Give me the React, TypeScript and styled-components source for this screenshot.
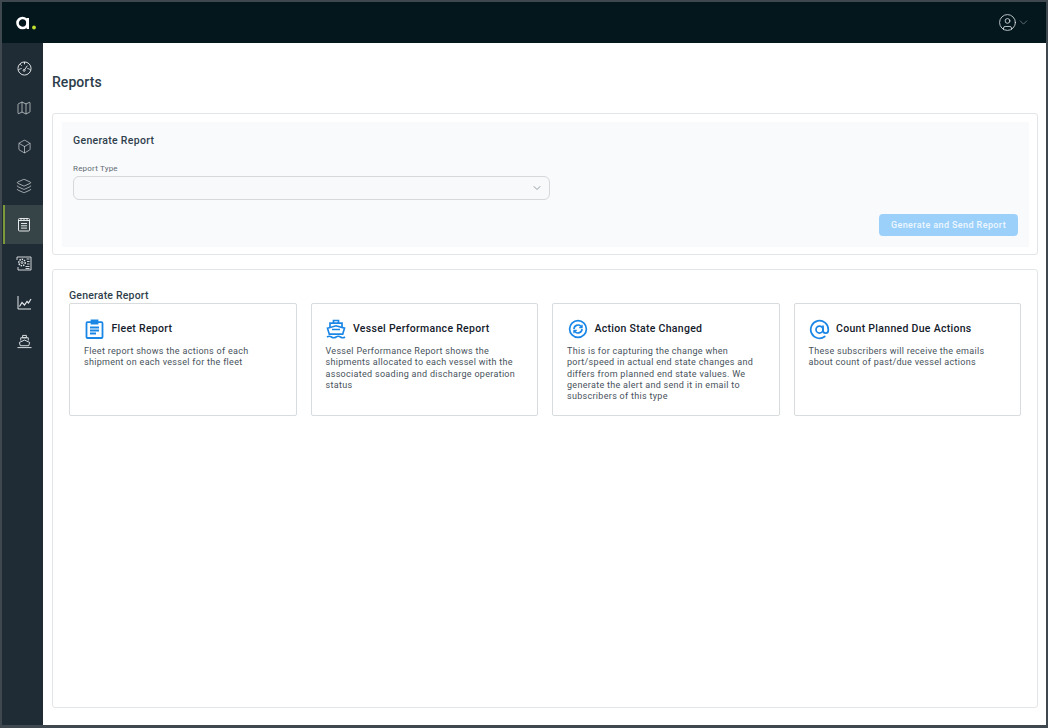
import React from 'react';
import styled, { createGlobalStyle } from 'styled-components';
import { AtSign, Box, ChevronDown, CircleUser, Layers, Map as MapIcon } from 'lucide-react';

const GlobalStyle = createGlobalStyle`
  html, body {
    margin: 0;
    padding: 0;
    background: #fff;
    font-family: "Roboto", "Liberation Sans", sans-serif;
  }
  * { box-sizing: border-box; }
`;

// Icons the packages do not have in this shape
const GaugeIcon = () => (
  <svg width="15" height="15" viewBox="0 0 16 16" fill="none" stroke="currentColor" strokeWidth="1">
    <circle cx="8" cy="8" r="7" />
    <path d="M1.500 9.500C3.500 8.200 4.500 8 5 8M14.500 9.500C12.500 8.200 11.500 8 11 8M8 9.500L11 5M8 1v2.500M3.500 3.500l1.500 1.500" />
    <circle cx="7.600" cy="10" r="1" />
  </svg>
);

const NotesIcon = () => (
  <svg width="14" height="15" viewBox="0 0 14 15" fill="none" stroke="currentColor" strokeWidth="1">
    <rect x="1.500" y="1.500" width="11" height="12.500" rx="1" />
    <path d="M1.500 3.500h11M4 1v2M7 1v2M10 1v2M4 6.500h6M4 8.800h6M4 11.100h6" />
  </svg>
);

const PlanIcon = () => (
  <svg width="16" height="15" viewBox="0 0 16 15" fill="none" stroke="currentColor" strokeWidth="0.9">
    <path d="M4 1H15V14H2V11M1 4V1H4" />
    <circle cx="6" cy="6.500" r="3.200" strokeDasharray="1.500 0.900" strokeWidth="1.500" />
    <circle cx="6" cy="6.500" r="1" />
    <path d="M10.500 3h3M11 5.500h2.500M11 8h2.500M9.500 10.500h4M9.500 12.500h4" />
  </svg>
);

const TrendIcon = () => (
  <svg width="15" height="15" viewBox="0 0 15 15" fill="none" stroke="currentColor" strokeWidth="1">
    <path d="M1 1v13h13" />
    <path d="M2.500 11.500L5 7.500l2.500 2.500L10 6.500l1.500 1.500L14 4" strokeWidth="1.200" />
  </svg>
);

const ShipIcon = () => (
  <svg width="15" height="15" viewBox="0 0 16 16" fill="none" stroke="currentColor" strokeWidth="1">
    <path d="M6 1.500h4V4H6zM4 7V4h8v3" />
    <path d="M2.500 9L8 6.500 13.500 9l-1 3.500h-9z" />
    <path d="M0.500 14.500h15" />
  </svg>
);

const BlueClipboardIcon = () => (
  <svg width="19" height="20" viewBox="0 0 19 20" fill="none" stroke="#1a87e6" strokeWidth="1.800">
    <rect x="1.500" y="3.200" width="16" height="15.800" rx="1" />
    <path d="M6.500 4.500V1.500h6v3z" fill="#1a87e6" />
    <path d="M5 8.500h9M5 11.500h9M5 14.500h6" />
  </svg>
);

const BlueShipIcon = () => (
  <svg width="20" height="20" viewBox="0 0 20 20" fill="none" stroke="#1a87e6" strokeWidth="1.700">
    <path d="M7.500 1.500h5V4h-5zM4 8V4.200h12V8" />
    <path d="M1.500 9.200L10 6.800l8.500 2.400-1.800 6H3.300z" />
    <path d="M6 10.500h8M1 18c1.500-1 3-1 4.500 0s3 1 4.500 0 3-1 4.500 0 3 1 4.500 0" />
  </svg>
);

const SyncCircleIcon = () => (
  <svg width="20" height="20" viewBox="0 0 20 20" fill="none" stroke="#1a87e6" strokeWidth="1.700">
    <circle cx="10" cy="10" r="8.400" />
    <path d="M6 10a4 4 0 0 1 6.800-2.800L14 8.400M14 10a4 4 0 0 1-6.800 2.800L6 11.600" />
    <path d="M14 5.800v2.800h-2.800M6 14.200v-2.800h2.800" strokeWidth="1.300" />
  </svg>
);

const LogoIcon = () => (
  <svg width="21" height="14" viewBox="0 0 21 14" fill="none">
    <circle cx="6.500" cy="7" r="5" stroke="#fff" strokeWidth="2.600" />
    <path d="M11.800 2v11" stroke="#fff" strokeWidth="2.400" />
    <circle cx="18" cy="11.500" r="1.900" fill="#c3e02f" />
  </svg>
);

type ReportCardData = {
  title: string;
  description: string;
  icon: React.ReactNode;
};

const reportCards: ReportCardData[] = [
  {
    title: 'Fleet Report',
    description: 'Fleet report shows the actions of each shipment on each vessel for the fleet',
    icon: <BlueClipboardIcon />,
  },
  {
    title: 'Vessel Performance Report',
    description:
      'Vessel Performance Report shows the shipments allocated to each vessel with the associated soading and discharge operation status',
    icon: <BlueShipIcon />,
  },
  {
    title: 'Action State Changed',
    description:
      'This is for capturing the change when port/speed in actual end state changes and differs from planned end state values. We generate the alert and send it in email to subscribers of this type',
    icon: <SyncCircleIcon />,
  },
  {
    title: 'Count Planned Due Actions',
    description: 'These subscribers will receive the emails about count of past/due vessel actions',
    icon: <AtSign size={21} color="#1a87e6" strokeWidth={2} />,
  },
];

const App: React.FC = () => {
  return (
    <>
      <GlobalStyle />
      <Frame>
        <TopBar>
          <LogoIcon />
          <UserMenu>
            <CircleUser size={19} strokeWidth={1} />
            <ChevronDown size={13} strokeWidth={1} color="#aab3b8" />
          </UserMenu>
        </TopBar>
        <Body>
          <SideNav>
            <NavItem><GaugeIcon /></NavItem>
            <NavItem><MapIcon size={16} strokeWidth={1} /></NavItem>
            <NavItem><Box size={15} strokeWidth={1} /></NavItem>
            <NavItem><Layers size={16} strokeWidth={1} /></NavItem>
            <NavItem $active><NotesIcon /></NavItem>
            <NavItem><PlanIcon /></NavItem>
            <NavItem><TrendIcon /></NavItem>
            <NavItem><ShipIcon /></NavItem>
          </SideNav>
          <Main>
            <PageTitle>Reports</PageTitle>
            <FormCard>
              <FormPanel>
                <FormTitle>Generate Report</FormTitle>
                <FieldLabel>Report Type</FieldLabel>
                <SelectBox>
                  <ChevronDown size={12} strokeWidth={1.3} color="#5f6b73" />
                </SelectBox>
                <ActionRow>
                  <SendButton>Generate and Send Report</SendButton>
                </ActionRow>
              </FormPanel>
            </FormCard>
            <ListCard>
              <ListTitle>Generate Report</ListTitle>
              <CardGrid>
                {reportCards.map((card) => (
                  <ReportCard key={card.title}>
                    <CardHead>
                      <CardIcon>{card.icon}</CardIcon>
                      <CardTitle>{card.title}</CardTitle>
                    </CardHead>
                    <CardText>{card.description}</CardText>
                  </ReportCard>
                ))}
              </CardGrid>
            </ListCard>
          </Main>
        </Body>
      </Frame>
    </>
  );
};

const Frame = styled.div`
  width: 1048px;
  height: 728px;
  display: flex;
  flex-direction: column;
  background: #fff;
  border-style: solid;
  border-color: #3f484e;
  border-width: 2px 2px 3px 2px;
`;

const TopBar = styled.header`
  height: 41px;
  flex: none;
  display: flex;
  align-items: center;
  justify-content: space-between;
  padding: 0 16px 0 14px;
  background: #04171d;
`;

const UserMenu = styled.div`
  display: flex;
  align-items: center;
  gap: 0;
  color: #e8ecee;
`;

const Body = styled.div`
  flex: 1;
  min-height: 0;
  display: flex;
`;

const SideNav = styled.nav`
  width: 41px;
  flex: none;
  display: flex;
  flex-direction: column;
  padding-top: 6px;
  background: #1f2c35;
`;

const NavItem = styled.div<{ $active?: boolean }>`
  height: 39px;
  flex: none;
  display: flex;
  align-items: center;
  justify-content: center;
  color: #e3e7e9;
  background: ${(p) => (p.$active ? '#364347' : 'transparent')};
  border-left: 2px solid ${(p) => (p.$active ? '#7c9a3a' : 'transparent')};
  margin-left: 1px;
`;

const Main = styled.main`
  flex: 1;
  min-width: 0;
  display: flex;
  flex-direction: column;
  padding: 0 8px 17px 9px;
`;

const PageTitle = styled.h1`
  margin: 30px 0 22px;
  height: 18px;
  font-size: 14px;
  line-height: 18px;
  font-weight: 500;
  letter-spacing: 0.05px;
  color: #2c3d4b;
`;

const FormCard = styled.section`
  height: 142px;
  flex: none;
  padding: 8px 8px 7px 9px;
  border: 1px solid #e3e6e8;
  border-radius: 3px;
`;

const FormPanel = styled.div`
  height: 100%;
  display: flex;
  flex-direction: column;
  padding: 12px 11px 0 11px;
  background: #f9fafc;
`;

const FormTitle = styled.h2`
  margin: 0 0 16px;
  font-size: 10.500px;
  line-height: 14px;
  font-weight: 500;
  letter-spacing: 0.3px;
  color: #2f3f4c;
`;

const FieldLabel = styled.label`
  font-size: 8px;
  line-height: 10px;
  font-weight: 400;
  letter-spacing: 0.2px;
  color: #5f6b73;
  margin-bottom: 2px;
`;

const SelectBox = styled.div`
  width: 477px;
  height: 24px;
  display: flex;
  align-items: center;
  justify-content: flex-end;
  padding-right: 6px;
  background: #f7f9fb;
  border: 1px solid #d5d9dc;
  border-radius: 6px;
`;

const ActionRow = styled.div`
  display: flex;
  justify-content: flex-end;
  margin-top: 14px;
`;

const SendButton = styled.button`
  width: 139px;
  height: 22px;
  padding: 0;
  border: none;
  border-radius: 4px;
  background: #9bd0fb;
  color: #eef7ff;
  font-family: inherit;
  font-size: 9px;
  font-weight: 500;
  letter-spacing: 0.4px;
`;

const ListCard = styled.section`
  flex: 1;
  min-height: 0;
  margin-top: 14px;
  padding: 19px 16px 0 16px;
  border: 1px solid #e3e6e8;
  border-radius: 3px;
`;

const ListTitle = styled.h2`
  margin: 0;
  height: 14px;
  font-size: 10.500px;
  line-height: 14px;
  font-weight: 500;
  letter-spacing: 0.2px;
  color: #2f3f4c;
`;

const CardGrid = styled.div`
  display: grid;
  grid-template-columns: repeat(4, 1fr);
  gap: 14px;
`;

const ReportCard = styled.article`
  height: 113px;
  padding: 14px 14px 0;
  border: 1px solid #d9dcde;
  border-radius: 2px;
  background: #fff;
`;

const CardHead = styled.div`
  display: flex;
  align-items: center;
  gap: 6.500px;
  height: 22px;
  margin-bottom: 6px;
`;

const CardIcon = styled.span`
  width: 21px;
  display: flex;
  justify-content: center;
  flex: none;
`;

const CardTitle = styled.h3`
  margin: 0;
  font-size: 10.500px;
  line-height: 14px;
  font-weight: 500;
  letter-spacing: 0.29px;
  color: #14202a;
`;

const CardText = styled.p`
  margin: 0;
  font-size: 9px;
  line-height: 11.250px;
  letter-spacing: 0.3px;
  color: #47525b;
`;

export default App;
